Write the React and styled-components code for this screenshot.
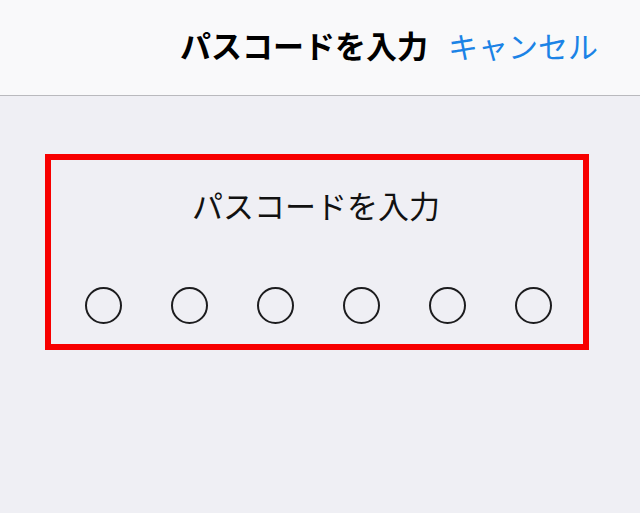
import React from "react";
import styled, { createGlobalStyle } from "styled-components";

const GlobalStyle = createGlobalStyle`
  html, body {
    margin: 0;
    padding: 0;
    background: #efeff4;
  }
  body {
    font-family: "Noto Sans CJK JP", "Noto Sans", sans-serif;
  }
`;

const Screen = styled.div`
  width: 640px;
  height: 513px;
  background: #efeff4;
  display: flex;
  flex-direction: column;
  overflow: hidden;
`;

const NavBar = styled.header`
  height: 96px;
  background: #f9f9fa;
  border-bottom: 1px solid #b9b9bd;
  display: flex;
  align-items: center;
  justify-content: flex-end;
  gap: 20px;
  padding: 0 42px 6px 0;
  box-sizing: border-box;
`;

const NavTitle = styled.h1`
  margin: 0;
  font-size: 31px;
  font-weight: 700;
  color: #000;
`;

const CancelButton = styled.button`
  border: none;
  background: none;
  padding: 0;
  font-family: inherit;
  font-size: 30px;
  font-weight: 400;
  color: #1b83e6;
  cursor: pointer;
`;

const Content = styled.main`
  flex: 1;
  padding: 58px 0 0 45px;
`;

const Highlight = styled.section`
  width: 544px;
  height: 196px;
  box-sizing: border-box;
  border: 6px solid #f70000;
  display: flex;
  flex-direction: column;
  align-items: center;
  padding-top: 23px;
`;

const Prompt = styled.p`
  margin: 0;
  font-size: 31px;
  font-weight: 400;
  color: #111;
  line-height: 44px;
  padding-right: 2px;
`;

const Dots = styled.div`
  display: flex;
  gap: 49px;
  margin-top: 60px;
  margin-left: 3px;
`;

const Dot = styled.span`
  width: 37px;
  height: 37px;
  box-sizing: border-box;
  border: 2px solid #1c1c1e;
  border-radius: 50%;
  background: ${(p) => (p.$filled ? "#1c1c1e" : "transparent")};
`;

export default function App() {
  const digits = ["", "", "", "", "", ""];
  return (
    <>
      <GlobalStyle />
      <Screen>
        <NavBar>
          <NavTitle>パスコードを入力</NavTitle>
          <CancelButton>キャンセル</CancelButton>
        </NavBar>
        <Content>
          <Highlight>
            <Prompt>パスコードを入力</Prompt>
            <Dots>
              {digits.map((d, i) => (
                <Dot key={i} $filled={d !== ""} />
              ))}
            </Dots>
          </Highlight>
        </Content>
      </Screen>
    </>
  );
}
